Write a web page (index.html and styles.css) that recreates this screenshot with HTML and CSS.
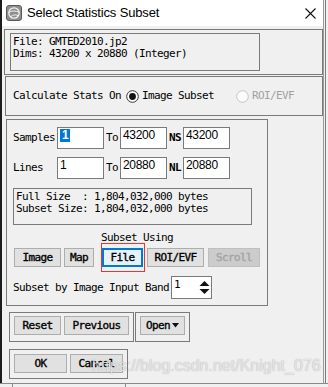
FILE: index.html
```html
<!DOCTYPE html>
<html>
<head>
<meta charset="utf-8">
<link rel="stylesheet" href="styles.css">
</head>
<body>
<div class="screen">
  <div class="main">
    <div class="window">
      <div class="titlebar">
        <svg class="appicon" width="16" height="16" viewBox="0 0 16 16">
          <rect x="0.5" y="0.5" width="15" height="15" rx="2.5" fill="#8e8e8e" stroke="#5a5a5a"/>
          <circle cx="8" cy="8" r="5.2" fill="none" stroke="#f4f4f4" stroke-width="1.3"/>
          <path d="M3.2 7.2 C6 5.6 10 5.6 12.8 7.2" fill="none" stroke="#f4f4f4" stroke-width="1"/>
          <path d="M5 11.6 C7 9.6 9.5 9.4 12 10.6" fill="none" stroke="#f4f4f4" stroke-width="1"/>
        </svg>
        <span class="title">Select Statistics Subset</span>
        <svg class="close" width="11" height="11" viewBox="0 0 11 11">
          <path d="M0.5 0.5 L10.5 10.5 M10.5 0.5 L0.5 10.5" stroke="#111" stroke-width="1.1"/>
        </svg>
      </div>
      <div class="client">
        <div class="frame f-file">
          <div class="textbox tb-file">File: GMTED2010.jp2
Dims: 43200 x 20880 (Integer)</div>
        </div>
        <div class="frame f-calc">
          <span>Calculate Stats On</span>
          <svg class="radio r1" width="13" height="13" viewBox="0 0 13 13">
            <circle cx="6.5" cy="6.5" r="5.8" fill="#fff" stroke="#333"/>
            <circle cx="6.5" cy="6.5" r="3.4" fill="#111"/>
          </svg>
          <span class="rlabel">Image Subset</span>
          <svg class="radio r2" width="13" height="13" viewBox="0 0 13 13">
            <circle cx="6.5" cy="6.5" r="5.8" fill="#fbfbfb" stroke="#c4c4c4"/>
          </svg>
          <span class="rlabel disabled">ROI/EVF</span>
        </div>
        <div class="frame f-subset">
          <div class="row">
            <span class="lab">Samples</span>
            <div class="edit"><span class="sel">1</span></div>
            <span class="to">To</span>
            <div class="edit">43200</div>
            <span class="to bold">NS</span>
            <div class="edit">43200</div>
          </div>
          <div class="row row2">
            <span class="lab">Lines</span>
            <div class="edit">1</div>
            <span class="to">To</span>
            <div class="edit">20880</div>
            <span class="to bold">NL</span>
            <div class="edit">20880</div>
          </div>
          <div class="textbox tb-info">Full Size  : 1,804,032,000 bytes
Subset Size: 1,804,032,000 bytes</div>
          <div class="caption">Subset Using</div>
          <div class="btnrow">
            <div class="btn w-image">Image</div>
            <div class="btn w-map">Map</div>
            <div class="btn w-file focus">File</div>
            <div class="btn w-roi">ROI/EVF</div>
            <div class="btn w-scroll disabled">Scroll</div>
            <div class="redmark"></div>
          </div>
          <div class="row bandrow">
            <span>Subset by Image Input Band</span>
            <div class="spin">
              <span class="spinval">1</span>
              <svg class="spinarrows" width="11" height="16" viewBox="0 0 11 16">
                <path d="M0.5 6 L5.5 1 L10.5 6 Z" fill="#111"/>
                <path d="M0.5 9 L10.5 9 L5.5 14 Z" fill="#111"/>
              </svg>
            </div>
          </div>
        </div>
        <div class="bottomrow">
          <div class="frame f-reset">
            <div class="btn w-reset">Reset</div>
            <div class="btn w-prev">Previous</div>
          </div>
          <div class="frame f-open">
            <div class="btn w-open">Open<svg class="drop" width="7" height="5" viewBox="0 0 7 5"><path d="M0 0 L7 0 L3.5 4.5 Z" fill="#111"/></svg></div>
          </div>
        </div>
        <div class="frame f-ok">
          <div class="btn w-ok">OK</div>
          <div class="btn w-cancel">Cancel</div>
        </div>
      </div>
    </div>
    <div class="side"><div class="sideline"></div></div>
  </div>
  <div class="below">
    <div class="below-a"></div>
    <div class="below-b"></div>
  </div>
  <div class="watermark">https://blog.csdn.net/Knight_076</div>
</div>
</body>
</html>
```
FILE: styles.css
```css
* { box-sizing: border-box; margin: 0; padding: 0; }
html, body { width: 328px; height: 387px; overflow: hidden; background: #f0f0f0; }
body {
  font-family: "DejaVu Sans Mono", monospace;
  font-size: 11px;
  letter-spacing: -0.62px;
  line-height: 12px;
  color: #000;
}
.screen { position: relative; width: 328px; height: 387px; display: flex; flex-direction: column; }
.main { display: flex; height: 383px; }
.window {
  width: 324px;
  height: 383px;
  border-left: 2px solid #1c1c1c;
  border-right: 1px solid #9a9a9a;
  background: #f0f0f0;
  display: flex;
  flex-direction: column;
}
.side { flex: 1; display: flex; background: #f0f0f0; }
.sideline { width: 1px; margin-left: 1px; background: #7c7c7c; }
.below { height: 4px; border-top: 1px solid #8a8a8a; background: #f0f0f0; display: flex; }
.below-a { width: 1px; margin-left: 12px; background: #8a8a8a; }
.below-b { width: 1px; margin-left: 112px; background: #8a8a8a; }

.titlebar {
  height: 26px;
  background: #fff;
  display: flex;
  align-items: center;
}
.appicon { margin-left: 4px; }
.title {
  margin-left: 5px;
  font-family: "Liberation Sans", Arial, sans-serif;
  font-size: 13px;
  letter-spacing: -0.15px;
  color: #000;
  line-height: 16px;
}
.close { margin-left: auto; margin-right: 7px; }

.client { display: flex; flex-direction: column; }
.frame { border: 1px solid #7a7a7a; }
.textbox { border: 1px solid #7a7a7a; white-space: pre; padding: 2px 0 0 2px; }

.f-file { margin: 3px 0 0 2px; width: 319px; height: 46px; padding: 3px 0 0 5px; }
.tb-file { width: 250px; height: 38px; }

.f-calc {
  margin: 1px 0 0 3px;
  width: 318px;
  height: 40px;
  display: flex;
  align-items: center;
  padding-left: 7px;
}
.r1 { margin-left: 5px; }
.rlabel { margin-left: 3px; }
.r2 { margin-left: 22px; }
.disabled { color: #a0a0a0; }

.f-subset {
  margin: 3px 0 0 4px;
  width: 262px;
  height: 187px;
  padding: 7px 0 0 6px;
}
.row { display: flex; align-items: center; height: 22px; }
.row2 { margin-top: 8px; }
.lab { width: 44px; }
.to { width: 12px; margin: 0 2px; }
.bold { font-weight: bold; }
.edit {
  width: 47px;
  height: 22px;
  border: 1px solid #7a7a7a;
  background: #fff;
  padding: 1px 0 0 2px;
  font-family: "Liberation Sans", Arial, sans-serif;
  font-size: 12px;
  letter-spacing: -0.3px;
  line-height: 13px;
}
.sel { display: inline-block; background: #0078d7; color: #fff; padding: 0 2px; font-weight: bold; }
.tb-info { margin-top: 9px; width: 239px; height: 37px; }
.caption { margin-top: 7px; width: 248px; text-align: center; }

.btnrow { position: relative; display: flex; margin-top: 4px; margin-left: 1px; height: 19px; }
.btn {
  height: 19px;
  background: #e1e1e1;
  border: 1px solid #adadad;
  -webkit-text-stroke: 0.35px #000;
  display: flex;
  align-items: center;
  justify-content: center;
  line-height: 12px;
}
.w-image { width: 47px; }
.w-map { width: 30px; margin-left: 3px; }
.w-file { width: 41px; margin-left: 8px; }
.w-roi { width: 57px; margin-left: 4px; }
.w-scroll { width: 52px; margin-left: 4px; }
.btn.focus { background: #e5f1fb; border: 2px solid #0078d7; }
.btn.disabled { background: #cccccc; border-color: #bfbfbf; color: #a3a3a3; -webkit-text-stroke: 0.35px #a3a3a3; }
.redmark {
  position: absolute;
  left: 87px;
  top: -5px;
  width: 44px;
  height: 29px;
  border: 1px solid #e8352f;
}
.bandrow { margin-top: 9px; height: 23px; }
.spin {
  margin-left: 2px;
  width: 41px;
  height: 23px;
  border: 1px solid #7a7a7a;
  background: #fff;
  display: flex;
  align-items: flex-start;
}
.spinval { margin-left: 2px; margin-top: 2px; }
.spinarrows { margin-left: auto; margin-right: 1px; margin-top: 3px; }

.bottomrow { display: flex; margin-top: 6px; margin-left: 7px; }
.f-reset { width: 125px; height: 30px; padding: 3px 0 0 4px; display: flex; }
.w-reset { width: 47px; }
.w-prev { width: 65px; margin-left: 3px; }
.f-open { margin-left: 1px; width: 55px; height: 30px; padding: 3px 0 0 4px; display: flex; }
.w-open { width: 45px; }
.drop { margin-left: 2px; }
.f-ok { margin: 7px 0 0 7px; width: 119px; height: 30px; padding: 4px 0 0 4px; display: flex; }
.w-ok { width: 53px; }
.w-cancel { width: 53px; margin-left: 3px; }

.watermark {
  position: absolute;
  left: 92px;
  top: 357px;
  font-family: "Liberation Sans", Arial, sans-serif;
  font-size: 16px;
  letter-spacing: 0;
  line-height: 18px;
  color: rgba(255, 255, 255, 0.72);
  text-shadow: 0 0 1px rgba(90, 90, 90, 0.6);
}
```
